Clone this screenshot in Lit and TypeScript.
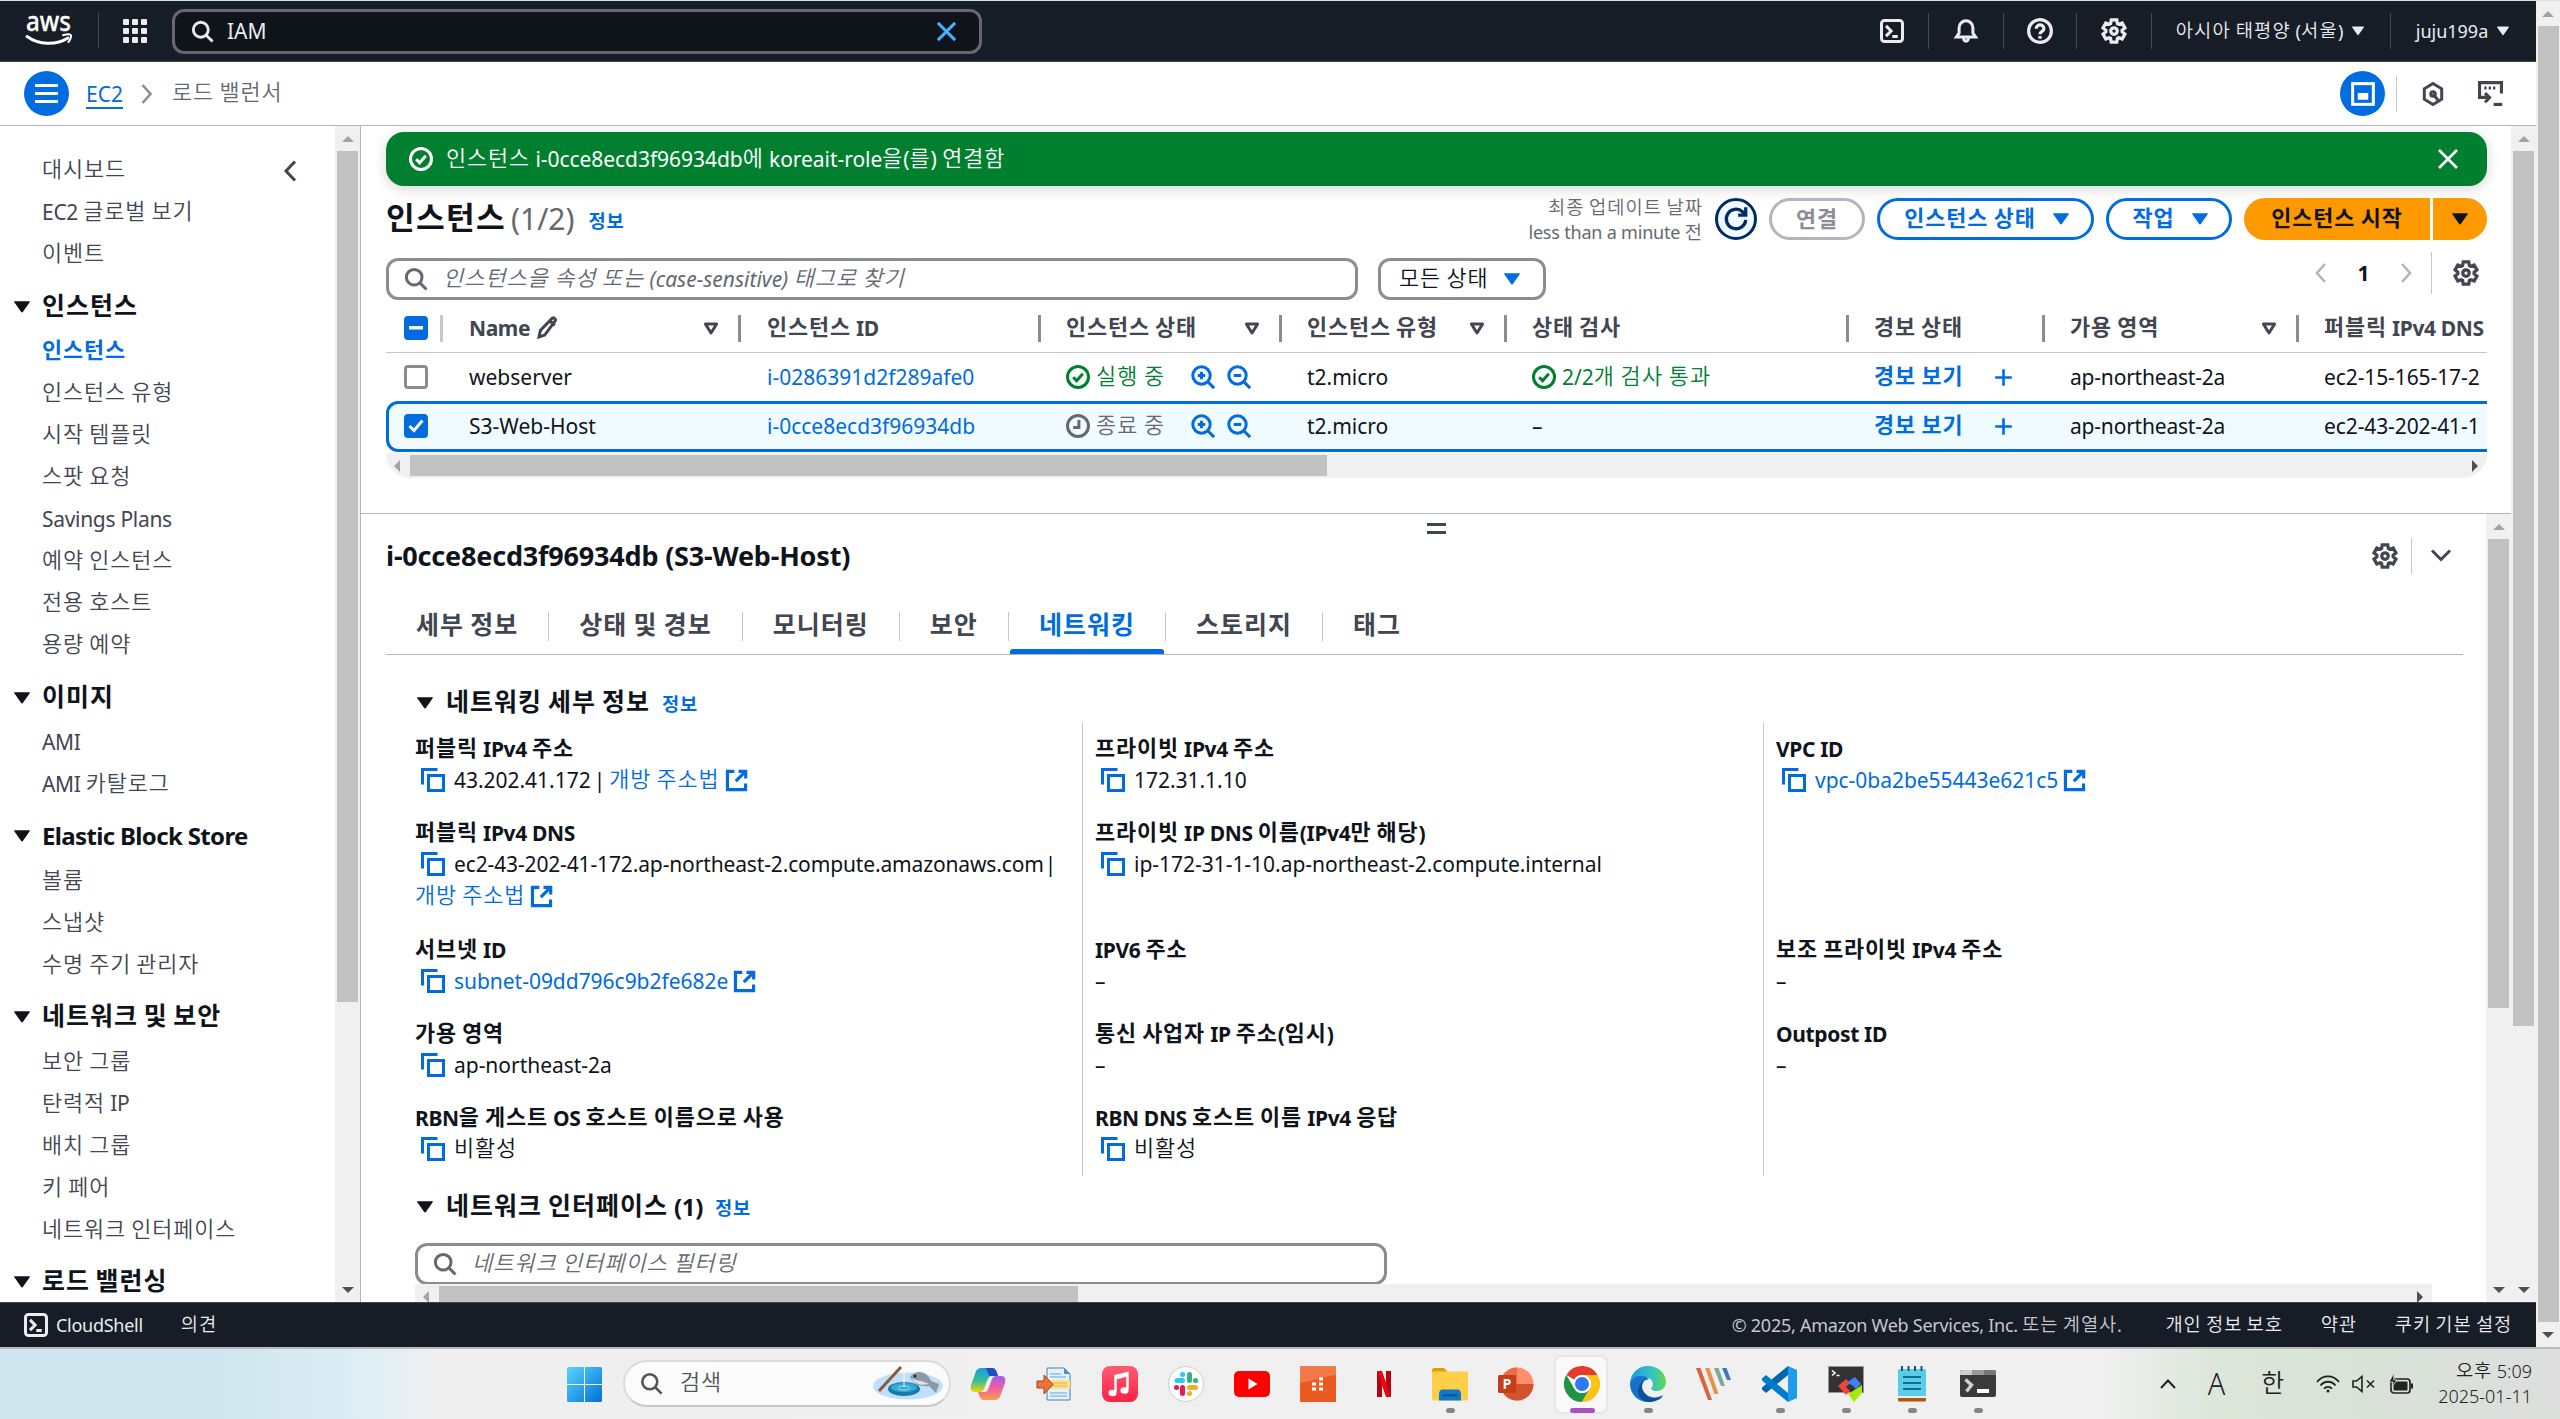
import { LitElement, html, svg, css, nothing, TemplateResult, SVGTemplateResult } from 'lit';
import { customElement } from 'lit/decorators.js';
import { classMap } from 'lit/directives/class-map.js';

/* Wraps Hangul runs so that they get their own face and pitch. */
const t = (s: string) =>
  s.split(/([가-힣]+)/).filter((p) => p !== '').map((p) => (/[가-힣]/.test(p) ? html`<span class="k">${p}</span>` : p));

const gearPath = (() => {
  const pts: string[] = [];
  for (let i = 0; i < 6; i++) {
    const base = -90 + i * 60;
    for (const [r, a] of [[5, -25], [7, -14], [7, 14], [5, 25]]) {
      const rad = ((base + a) * Math.PI) / 180;
      pts.push(`${(8 + r * Math.cos(rad)).toFixed(2)} ${(8 + r * Math.sin(rad)).toFixed(2)}`);
    }
  }
  return `M${pts.join('L')}Z`;
})();

const line: Record<string, SVGTemplateResult> = {
  search: svg`<circle cx="6.8" cy="6.8" r="5.2"/><path d="M10.6 10.6L15 15"/>`,
  close: svg`<path d="M2 2l12 12M14 2L2 14"/>`,
  shell: svg`<rect x="1" y="1" width="14" height="14" rx="2"/><path d="M4 4.6l3.4 3.4L4 11.4M8.2 11.6h3.6"/>`,
  bell: svg`<path d="M1.6 12h12.8L12.6 9.4V5.8a4.6 4.6 0 0 0-9.2 0v3.6zM6.4 12.4c0 3.2 3.2 3.2 3.2 0"/>`,
  help: svg`<circle cx="8" cy="8" r="7"/><path d="M5.7 6.6c0-3.1 4.7-3.1 4.7 0C10.4 8.3 8 8.1 8 10M8 11v1.7"/>`,
  gear: svg`<path d="${gearPath}"/><circle cx="8" cy="8" r="2"/>`,
  check: svg`<circle cx="8" cy="8" r="7"/><path d="M4.8 8.2l2.3 2.3 4.1-4.6"/>`,
  pending: svg`<circle cx="8" cy="8" r="7"/><path d="M8.6 4v5H4.8"/>`,
  zoomin: svg`<circle cx="7" cy="7" r="5.8"/><path d="M11.2 11.2L15.4 15.4M4.5 7h5M7 4.5v5"/>`,
  zoomout: svg`<circle cx="7" cy="7" r="5.8"/><path d="M11.2 11.2L15.4 15.4M4.5 7h5"/>`,
  edit: svg`<path d="M2 14l.9-4.4 8-8.2c.8-.8 2.6.9 1.9 1.8L5.8 12.7zM9.2 3.2l3.300 3"/>`,
  copy: svg`<path d="M1 11V1h10"/><rect x="5" y="5" width="10" height="10"/>`,
  external: svg`<path d="M6.500 1.600H1.700v12.800h12.600V10M9.400 1.600h5v5M14.200 1.800L7.500 8.500"/>`,
  refresh: svg`<path d="M14 8.500a6 6 0 1 1-2-5l1.700 1.700M14 .8v4.800H9.300"/>`,
  plus: svg`<path d="M8 1v14M1 8h14"/>`,
  hex: svg`<path d="M8 1l5.800 3.500v7L8 15l-5.800-3.500v-7z"/><path d="M8 8l3.400 4.200"/><circle cx="8" cy="8" r="1.500"/>`,
  tutorial: svg`<path d="M15 8V1H1v9.500h6M4.500 7.800L7.400 10.600 4.500 13.600"/><path d="M10 15h5.500"/><path stroke-dasharray="1.5 1.3" d="M4 4.500h8"/>`,
  splitpanel: svg`<rect x="1.100" y="1.100" width="13.800" height="13.800"/><path d="M4.500 7.300h7v4.500h-7z" fill="currentColor" stroke="none"/>`,
};

const ic = (name: string, size = 24, sw = 2) => html`<svg class="ic" width=${size} height=${size} viewBox="0 0 16 16" fill="none" stroke="currentColor" stroke-width=${sw}>${line[name]}</svg>`;
const caret = (w = 15, h = 11) => html`<svg class="ic" width=${w} height=${h} viewBox="0 0 15 11"><path d="M.8 0h13.400c.6 0 .9.6.5 1L8.300 10.300c-.4.6-1.200.6-1.600 0L.3 1C-.1.600.2 0 .8 0z" fill="currentColor"/></svg>`;
const sortIcon = html`<svg class="ic sort" width="16" height="14" viewBox="0 0 16 14"><path d="M2.400 3h11.200L8 12z" fill="none" stroke="currentColor" stroke-width="3" stroke-linejoin="round"/></svg>`;
const tri = (dir: string, dark: boolean) => html`<span class=${classMap({ tri: true, [dir]: true, dark })}></span>`;
const vbar = (cls: string) => html`<div class="vbar ${cls}">${tri('up', false)}<div class="vthumb"></div>${tri('dn', true)}</div>`;
const hbar = (cls: string) => html`<div class="hbar ${cls}">${tri('lf', false)}<div class="hthumb"></div>${tri('rt', true)}</div>`;

type Nav = { head?: string; items: string[] };
const NAV: Nav[] = [
  { items: ['대시보드', 'EC2 글로벌 보기', '이벤트'] },
  { head: '인스턴스', items: ['인스턴스', '인스턴스 유형', '시작 템플릿', '스팟 요청', 'Savings Plans', '예약 인스턴스', '전용 호스트', '용량 예약'] },
  { head: '이미지', items: ['AMI', 'AMI 카탈로그'] },
  { head: 'Elastic Block Store', items: ['볼륨', '스냅샷', '수명 주기 관리자'] },
  { head: '네트워크 및 보안', items: ['보안 그룹', '탄력적 IP', '배치 그룹', '키 페어', '네트워크 인터페이스'] },
  { head: '로드 밸런싱', items: [] },
];

type Field = { label: string; value: string; kind?: 'copy' | 'link'; extra?: string; tall?: boolean };
const FIELDS: Field[][] = [
  [
    { label: '퍼블릭 IPv4 주소', value: '43.202.41.172', kind: 'copy', extra: '개방 주소법' },
    { label: '퍼블릭 IPv4 DNS', value: 'ec2-43-202-41-172.ap-northeast-2.compute.amazonaws.com', kind: 'copy', extra: '개방 주소법', tall: true },
    { label: '서브넷 ID', value: 'subnet-09dd796c9b2fe682e', kind: 'link' },
    { label: '가용 영역', value: 'ap-northeast-2a', kind: 'copy' },
    { label: 'RBN을 게스트 OS 호스트 이름으로 사용', value: '비활성', kind: 'copy' },
  ],
  [
    { label: '프라이빗 IPv4 주소', value: '172.31.1.10', kind: 'copy' },
    { label: '프라이빗 IP DNS 이름(IPv4만 해당)', value: 'ip-172-31-1-10.ap-northeast-2.compute.internal', kind: 'copy', tall: true },
    { label: 'IPV6 주소', value: '–' },
    { label: '통신 사업자 IP 주소(임시)', value: '–' },
    { label: 'RBN DNS 호스트 이름 IPv4 응답', value: '비활성', kind: 'copy' },
  ],
  [
    { label: 'VPC ID', value: 'vpc-0ba2be55443e621c5', kind: 'link' },
    { label: '', value: '', tall: true },
    { label: '보조 프라이빗 IPv4 주소', value: '–' },
    { label: 'Outpost ID', value: '–' },
  ],
];

const ROWS = [
  { name: 'webserver', id: 'i-0286391d2f289afe0', running: true, check: '2/2개 검사 통과', dns: 'ec2-15-165-17-2', sel: false },
  { name: 'S3-Web-Host', id: 'i-0cce8ecd3f96934db', running: false, check: '–', dns: 'ec2-43-202-41-1', sel: true },
];

const app = (inner: SVGTemplateResult, state = '') => html`<div class="app ${state}"><svg width="36" height="36" viewBox="0 0 36 36">${inner}</svg>${state ? html`<i class="run"></i>` : nothing}</div>`;

@customElement('app-root')
export class AppRoot extends LitElement {
  static styles = css`
    :host { display: block; width: 2560px; height: 1419px; overflow: hidden; font-family: 'Noto Sans', 'Noto Sans CJK KR', sans-serif; font-size: 21px; line-height: 30px; color: #0f141a; background: #fff; --kw: 350; }
    * { box-sizing: border-box; }
    .k { font-family: 'Noto Sans CJK KR', sans-serif; font-size: 1.04em; letter-spacing: 0.042em; line-height: 0; font-weight: var(--kw); position: relative; top: -0.03em; }
    .b, .h1, .info, .btn, .th, .tabs, .sect, .lbl, .head, .item.on { --kw: 700; }
    .ic { flex: none; display: block; overflow: visible; }
    .row { display: flex; align-items: center; white-space: nowrap; }
    .b { font-weight: 700; }
    .blue { color: #006ce0; }
    .browser { display: flex; height: 1347px; }
    .page { width: 2536px; display: flex; flex-direction: column; border-top: 1px solid #d9e2dc; }

    /* scrollbars */
    .vbar { width: 25px; flex: none; background: #f0f0f0; display: flex; flex-direction: column; align-items: center; padding: 10px 0 9px; }
    .vthumb { width: 21px; background: #c1c1c1; margin: 9px 0 auto; }
    .vbar.outer { width: 24px; border-top: 1px solid #d9e2dc; }
    .outer .vthumb { height: 1296px; }
    .side .vthumb { height: 851px; }
    .main .vthumb { height: 875px; }
    .panel .vthumb { height: 469px; }
    .tri { width: 0; height: 0; flex: none; border: 6px solid transparent; }
    .up { border-width: 0 6px 6px; border-bottom-color: #a3a3a3; }
    .dn { border-width: 6px 6px 0; }
    .dn.dark { border-top-color: #505050; }
    .lf { border-width: 6px 6px 6px 0; border-right-color: #a3a3a3; }
    .rt { border-width: 6px 0 6px 6px; border-left-color: #505050; }
    .hbar { background: #f0f0f0; height: 25px; display: flex; align-items: center; padding: 0 9px 0 8px; }
    .hthumb { height: 21px; background: #c1c1c1; margin: 0 auto 0 10px; }
    .hbar.table { border-radius: 0 0 24px 24px; margin-top: 1px; }
    .table .hthumb { width: 917px; }
    .hbar.eni { width: 2017px; margin-top: -1px; position: relative; }
    .eni .hthumb { width: 639px; }

    /* top bar */
    .top { height: 61px; background: #161d26; border-bottom: 1px solid #424650; color: #ebebf0; font-size: 18px; padding-left: 25px; }
    .sep { width: 1px; height: 36px; background: #424650; flex: none; }
    .top > .sep { margin-left: 25px; }
    .grid9 { display: grid; grid-template-columns: repeat(3, 6px); gap: 3px; margin: 0 25px 0 24px; }
    .grid9 i { height: 6px; background: #ebebf0; border-radius: 1px; }
    .gsearch { width: 810px; height: 45px; border: 3px solid #656871; border-radius: 12px; background: #0f141a; padding: 0 21px 0 16px; font-size: 21px; }
    .gsearch .txt { margin-left: 13px; flex: 1; }
    .sky { color: #42b4ff; }
    .topicons { margin-left: auto; }
    .cell { display: flex; align-items: center; justify-content: center; height: 36px; border-left: 1px solid #424650; }
    .c1 { width: 73px; border-left: 0; }
    .c2 { width: 75px; }
    .c3 { width: 73px; }
    .c4 { width: 75px; }
    .c5 { width: 239px; }
    .c6 { width: 146px; }
    .c5, .c6 { gap: 9px; padding-right: 2px; }
    .c5 .k { letter-spacing: 0.065em; }

    /* breadcrumb bar */
    .crumbs { height: 64px; border-bottom: 1px solid #b4b4bb; padding-left: 24px; padding-right: 33px; }
    .round { width: 45px; height: 45px; border-radius: 50%; background: #006ce0; color: #fff; display: flex; align-items: center; justify-content: center; flex: none; }
    .burger { display: flex; flex-direction: column; gap: 5px; width: 23px; }
    .burger i { height: 3px; background: #fff; }
    .ec2 { color: #006ce0; line-height: 26px; border-bottom: 2px solid #006ce0; margin: 2px 18px 0 17px; }
    .here { color: #656871; margin: 0 0 1px 19px; }
    .tools { margin-left: auto; color: #424650; }
    .lt { background: #c6c6cd; margin: 0 24px 0 11px; }
    .hexi { margin-right: 33px; }

    /* body */
    .body { height: 1176px; display: flex; overflow: hidden; }
    .nav { width: 335px; color: #424650; padding-top: 23px; position: relative; overflow: hidden; white-space: nowrap; letter-spacing: -0.3px; }
    .nav .item { height: 42px; line-height: 42px; padding-left: 42px; }
    .nav .item.on { color: #006ce0; font-weight: 700; }
    .nav .head { height: 44px; margin-top: 10.8px; display: flex; align-items: center; font-size: 24px; font-weight: 700; color: #0f141a; padding: 0 0 2px 14px; gap: 12px; letter-spacing: -0.65px; }
    .collapse { position: absolute; left: 280px; top: 34px; }
    .work { border-left: 1px solid #b4b4bb; width: 2151px; flex: none; display: flex; flex-direction: column; }
    .upper { height: 387px; padding: 6px 24px 0 25px; overflow: hidden; }
    .flash { height: 54px; border-radius: 18px; background: #00802f; color: #fff; padding: 0 27px 0 23px; box-shadow: 0 3px 14px rgba(0, 7, 22, 0.16); font-size: 21px; }
    .flash .txt { margin-left: 13px; flex: 1; letter-spacing: -0.05px; }
    .hdr { height: 42px; margin-top: 12px; }
    .h1 { font-size: 30px; font-weight: 700; }
    .count { font-size: 30px; color: #656871; margin-left: 5px; }
    .info { font-size: 18px; font-weight: 700; color: #006ce0; margin: 5px 0 0 14px; }
    .stamp { margin: 2px 12px 0 auto; text-align: right; font-size: 18px; line-height: 25px; color: #656871; letter-spacing: -0.2px; }
    .stamp .k { top: 0; letter-spacing: 0.055em; }
    .btn { height: 42px; border: 3px solid #006ce0; color: #006ce0; border-radius: 21px; font-weight: 700; display: flex; align-items: center; justify-content: center; gap: 17px; margin-left: 12px; }
    .refresh { width: 42px; height: 42px; border: 3px solid #002b66; border-radius: 50%; color: #002b66; background: #f0fbff; display: flex; align-items: center; justify-content: center; }
    .w96 { width: 96px; border-color: #b4b4bb; color: #8c8c94; }
    .w217 { width: 217px; padding-left: 2px; }
    .w126 { width: 126px; padding-left: 2px; }
    .launch { width: 186px; background: #ff9900; border: 0; color: #0f141a; border-radius: 21px 0 0 21px; }
    .launchmore { width: 54px; background: #ff9900; border: 0; color: #0f141a; border-radius: 0 21px 21px 0; margin-left: 3px; }
    .filters { margin-top: 18px; height: 42px; }
    .field { width: 972px; height: 42px; border: 3px solid #8c8c94; border-radius: 12px; padding-left: 15px; color: #656871; background: #fff; }
    .field .txt { margin-left: 15px; font-style: italic; }
    .field .k { letter-spacing: 0.048em; }
    .select { width: 168px; height: 42px; border: 3px solid #8c8c94; border-radius: 12px; margin-left: 20px; padding: 0 23px 0 18px; justify-content: space-between; }
    .pager { margin: -12px 8px 0 auto; color: #b4b4bb; }
    .pager .n { color: #0f141a; font-weight: 700; width: 73px; text-align: center; }
    .pager .sep { background: #c6c6cd; height: 42px; margin: 0 21px 0 19px; }
    .gray { color: #424650; }

    .tr { display: grid; grid-template-columns: 57px 298px 300px 241px 225px 342px 196px 254px 188px; width: 2101px; align-items: center; white-space: nowrap; height: 48px; }
    .clip { overflow: hidden; width: 2101px; }
    .th { height: 53px; border-bottom: 1px solid #c6c6cd; color: #424650; font-weight: 700; padding-top: 4px; letter-spacing: -0.4px; }
    .th > div { height: 27px; border-right: 3px solid #8c8c94; }
    .tr > div { display: flex; align-items: center; padding: 0 0 0 26px; min-width: 0; }
    .tr.th > div { padding-right: 19px; }
    .tr > div:nth-child(n + 4) { padding-left: 25px; }
    .tr > div:nth-child(8) { letter-spacing: -0.2px; }
    .tr > div:last-child { letter-spacing: -0.1px; border-right: 0; padding-right: 0; }
    .tr.th > div:last-child { letter-spacing: -0.4px; }
    .th > div:first-child { border-color: #c6c6cd; }
    .th .sort { margin-left: auto; }
    .tr.tr > div:first-child { padding-left: 18px; padding-right: 0; }
    .tr.sel { height: 51px; width: 2130px; padding-bottom: 1px; border: 3px solid #006ce0; background: #f0fbff; border-radius: 12px; }
    .tr.sel > div { position: relative; left: -3px; }
    .box { width: 24px; height: 24px; border-radius: 4px; border: 3px solid #8c8c94; flex: none; background: #fff; }
    .box.full { background: #006ce0; border-color: #006ce0; color: #fff; display: flex; align-items: center; justify-content: center; }
    .green { color: #00802f; }
    .mut { color: #656871; }
    .st { margin-left: 6px; }
    .st .k { letter-spacing: 0.055em; }
    .zi { margin-left: 26px; color: #006ce0; }
    .zo { margin-left: 12px; color: #006ce0; }
    .pl { margin-left: 31px; color: #006ce0; }
    .pen { margin-left: 6px; }

    /* detail panel */
    .lower { flex: 1; border-top: 1px solid #b4b4bb; display: flex; min-height: 0; }
    .pbody { width: 2125px; flex: none; overflow: hidden; padding-left: 25px; }
    .handle { height: 24px; display: flex; flex-direction: column; align-items: center; gap: 5px; padding-top: 9px; width: 2100px; }
    .handle i { width: 19px; height: 3px; background: #424650; }
    .ptitle { height: 36px; font-size: 27px; font-weight: 700; padding: 0 35px 1px 0; letter-spacing: -0.19px; }
    .ptitle .sep { background: #c6c6cd; margin: 0 19px 0 13px; }
    .push { margin-left: auto; }
    .tabs { display: flex; margin-top: 27px; width: 2077px; height: 54px; border-bottom: 1px solid #b4b4bb; color: #424650; font-size: 24px; font-weight: 700; line-height: 50px; white-space: nowrap; }
    .tab { padding: 0 31px 0 30px; position: relative; }
    .tab.on { color: #006ce0; }
    .tab.on::after { content: ''; position: absolute; left: 1px; right: 2px; bottom: 0; height: 5px; background: #006ce0; border-radius: 3px 3px 0 0; }
    .tab:not(:last-child)::before { content: ''; position: absolute; right: 0; top: 11px; height: 29px; width: 1px; background: #c6c6cd; }
    .sect { height: 36px; margin-top: 30px; padding-left: 31px; font-size: 24px; font-weight: 700; letter-spacing: -0.3px; }
    .sect .txt { margin-left: 13px; }
    .sect .info { margin-left: 12px; margin-top: 3px; }
    .sect2 { margin-top: 13px; }
    .cols { display: flex; margin: 2px 0 0 29px; height: 453px; }
    .col { width: 681px; border-left: 1px solid #c6c6cd; padding-left: 12px; }
    .col:first-child { border: 0; padding: 0; width: 667px; }
    .fld { height: 84px; padding-top: 11px; }
    .fld.tall { height: 117px; }
    .lbl { font-weight: 700; height: 30px; line-height: 31px; white-space: nowrap; letter-spacing: -0.35px; }
    .val { height: 32px; line-height: 32px; letter-spacing: -0.03px; }
    .col:first-child .tall .val { letter-spacing: -0.14px; }
    .cpw { margin: 0 9px 0 6px; }
    .ext { margin-left: 5px; }
    .bar { margin: 0 4px 0 3px; }
    .tall .bar { margin: 0 0 0 1px; }
    .eniwrap { padding-left: 29px; margin-top: 18px; }

    /* console footer */
    .foot { height: 45px; background: #161d26; border-top: 1px solid #424650; color: #ebebf0; font-size: 18px; padding: 0 24px; letter-spacing: -0.27px; }
    .foot .fb { margin-left: 38px; }
    .foot .c { margin-left: auto; color: #c6c6cd; }
    .foot .cs { margin-left: 8px; }
    .foot .p { margin-left: 44px; }
    .foot .q { margin-left: 38px; }
    .foot .k { letter-spacing: 0.045em; }

    /* desktop taskbar */
    .task { height: 72px; border-top: 2px solid #b9b9bb; display: flex; align-items: center; position: relative; background: linear-gradient(90deg, #cfe4ec 0, #d0e5ed 220px, #dceef5 350px, #efeff0 440px, #f0f0f0 2100px, #dbe5d8 2230px, #d9e1d7 2400px, #dddedd 2560px); color: #222; padding-left: 567px; }
    .pill { width: 328px; height: 47px; border-radius: 24px; background: #fbfbfb; border: 2px solid #dcdcdc; border-bottom-color: #c8c8c8; margin: 0 4px 2px 21px; padding: 0 5px 0 15px; color: #555; }
    .pill .txt { margin-left: 17px; flex: 1; font-weight: 300; }
    .app { width: 66px; height: 66px; display: flex; align-items: center; justify-content: center; position: relative; }
    .run { position: absolute; bottom: 4px; width: 9px; height: 5px; border-radius: 3px; background: #868686; }
    .active::before { content: ''; position: absolute; inset: 4px 7px 3px 5px; border-radius: 8px; background: #f9f9f9; border: 2px solid #e6e6e6; }
    .active svg { position: relative; }
    .active .run { width: 25px; background: #aa4fc4; }
    .tray { margin-left: auto; padding-right: 28px; font-weight: 300; }
    .mute { margin: 0 13px 0 12px; }
    .clock { text-align: right; font-size: 18px; line-height: 25px; margin-left: 25px; }
    .A { font-size: 31px; width: 20px; margin: 0 34px 2px 31px; transform: scaleX(0.93); }
    .han { font-size: 24px; margin: 0 31px 0 0; }
  `;

  private topBar() {
    return html`<div class="top row">
      <svg class="ic" width="48" height="30" viewBox="0 0 48 30" fill="none" stroke="#fff" stroke-linecap="round"><text x="1" y="14.800" fill="#fff" stroke="#fff" stroke-width=".3" font-family="Noto Sans" font-weight="500" font-size="27" textLength="45" lengthAdjust="spacingAndGlyphs">aws</text><path stroke-width="3" d="M2 20.500c12 8.500 29 9 41 1.500"/><path stroke-width="2" d="M38 19.300c3-1 6.500-1.300 7.800-.3.800 1.200-.2 4.500-2.400 7"/></svg>
      <span class="sep"></span>
      <span class="grid9">${Array.from({ length: 9 }, () => html`<i></i>`)}</span>
      <div class="gsearch row">${ic('search', 23, 2)}<span class="txt">IAM</span><span class="sky">${ic('close', 23, 2)}</span></div>
      <div class="topicons row">
        <div class="cell c1">${ic('shell')}</div><div class="cell c2">${ic('bell')}</div><div class="cell c3">${ic('help', 26)}</div><div class="cell c4">${ic('gear', 26)}</div>
        <div class="cell c5"><span>${t('아시아 태평양 (서울)')}</span>${caret(12, 10)}</div>
        <div class="cell c6"><span>juju199a</span>${caret(12, 10)}</div>
      </div>
    </div>`;
  }

  private crumbs() {
    return html`<div class="crumbs row">
      <span class="round"><span class="burger"><i></i><i></i><i></i></span></span>
      <span class="ec2">EC2</span><svg class="ic" width="12" height="20" viewBox="0 0 12 20" fill="none" stroke="#8c8c94" stroke-width="2.600"><path d="M1.500 1l8 9-8 9"/></svg>
      <span class="here">${t('로드 밸런서')}</span>
      <div class="tools row"><span class="round">${ic('splitpanel', 24, 2)}</span><span class="sep lt"></span><span class="hexi">${ic('hex', 24, 2)}</span><span>${ic('tutorial', 25, 2)}</span></div>
    </div>`;
  }

  private nav() {
    return html`<div class="nav"><svg class="collapse" width="20" height="22" viewBox="0 0 20 22" fill="none" stroke="#424650" stroke-width="3"><path d="M15 1.500L6 11l9 9.500"/></svg>
      ${NAV.map((g, gi) => html`${g.head ? html`<div class="head">${caret(16, 12)}<span>${t(g.head)}</span></div>` : nothing}
      ${g.items.map((s, i) => html`<div class=${classMap({ item: true, on: gi === 1 && i === 0 })}>${t(s)}</div>`)}`)}
    </div>`;
  }

  private upper() {
    const head: [string, TemplateResult | typeof nothing, boolean][] = [
      ['Name', html`<span class="pen">${ic('edit', 24, 2)}</span>`, true], ['인스턴스 ID', nothing, false], ['인스턴스 상태', nothing, true], ['인스턴스 유형', nothing, true],
      ['상태 검사', nothing, false], ['경보 상태', nothing, false], ['가용 영역', nothing, true], ['퍼블릭 IPv4 DNS', nothing, false],
    ];
    return html`<div class="upper">
      <div class="flash row">${ic('check', 24, 2)}<span class="txt">${t('인스턴스 i-0cce8ecd3f96934db에 koreait-role을(를) 연결함')}</span>${ic('close', 24, 1.8)}</div>
      <div class="hdr row">
        <span class="h1">${t('인스턴스')}</span><span class="count">(1/2)</span><span class="info">${t('정보')}</span>
        <div class="stamp">${t('최종 업데이트 날짜')}<br>${t('less than a minute 전')}</div>
        <span class="refresh">${ic('refresh', 26, 2)}</span>
        <span class="btn w96">${t('연결')}</span>
        <span class="btn w217"><span>${t('인스턴스 상태')}</span>${caret(16, 12)}</span>
        <span class="btn w126"><span>${t('작업')}</span>${caret(16, 12)}</span>
        <span class="btn launch"><span>${t('인스턴스 시작')}</span></span><span class="btn launchmore">${caret(16, 12)}</span>
      </div>
      <div class="filters row">
        <div class="field row">${ic('search', 24, 2)}<span class="txt">${t('인스턴스을 속성 또는 (case-sensitive) 태그로 찾기')}</span></div>
        <div class="select row"><span>${t('모든 상태')}</span><span class="blue">${caret(16, 12)}</span></div>
        <div class="pager row">
          <svg class="ic" width="12" height="20" viewBox="0 0 12 20" fill="none" stroke="currentColor" stroke-width="2.600"><path d="M10 1L2 10l8 9"/></svg><span class="n">1</span>
          <svg class="ic" width="12" height="20" viewBox="0 0 12 20" fill="none" stroke="currentColor" stroke-width="2.600"><path d="M2 1l8 9-8 9"/></svg><span class="sep"></span><span class="gray">${ic('gear', 26)}</span>
        </div>
      </div>
      <div class="clip">
        <div class="tr th"><div><span class="box full"><svg class="ic" width="14" height="4"><rect width="14" height="3.500" fill="#fff"/></svg></span></div>
          ${head.map(([s, x, so]) => html`<div><span>${t(s)}</span>${x}${so ? sortIcon : nothing}</div>`)}</div>
        ${ROWS.map((r) => html`<div class=${classMap({ tr: true, sel: r.sel })}>
          <div>${r.sel ? html`<span class="box full"><svg class="ic" width="16" height="14" viewBox="0 0 16 14" fill="none" stroke="#fff" stroke-width="3"><path d="M1.500 7l4.500 4.500L14.500 1.500"/></svg></span>` : html`<span class="box"></span>`}</div>
          <div>${r.name}</div><div class="blue">${r.id}</div>
          <div class=${r.running ? 'green' : 'mut'}>${ic(r.running ? 'check' : 'pending', 24, 2)}<span class="st">${t(r.running ? '실행 중' : '종료 중')}</span><span class="zi">${ic('zoomin', 24, 2)}</span><span class="zo">${ic('zoomout', 24, 2)}</span></div>
          <div>t2.micro</div>
          <div>${r.running ? html`<span class="green row">${ic('check', 24, 2)}<span class="st">${t(r.check)}</span></span>` : r.check}</div>
          <div><span class="b blue">${t('경보 보기')}</span><span class="pl">${ic('plus', 19, 2.200)}</span></div>
          <div>ap-northeast-2a</div><div>${r.dns}</div>
        </div>`)}
      </div>
      ${hbar('table')}
    </div>`;
  }

  private field(f: Field) {
    const link = (s: string) => html`<span class="blue">${t(s)}</span><span class="blue ext">${ic('external', 23, 2.200)}</span>`;
    return html`<div class=${classMap({ fld: true, tall: !!f.tall })}>
      <div class="lbl">${t(f.label)}</div>
      <div class="val row">${f.kind ? html`<span class="cpw blue">${ic('copy', 24, 2)}</span>` : nothing}${f.kind === 'link' ? link(f.value) : html`<span>${t(f.value)}</span>`}
        ${f.extra ? html`<span class="bar">|</span>${f.tall ? nothing : link(f.extra)}` : nothing}</div>
      ${f.extra && f.tall ? html`<div class="val row">${link(f.extra)}</div>` : nothing}
    </div>`;
  }

  private lower() {
    return html`<div class="lower"><div class="pbody">
      <div class="handle"><i></i><i></i></div>
      <div class="ptitle row"><span>i-0cce8ecd3f96934db (S3-Web-Host)</span><span class="push gray">${ic('gear', 26)}</span><span class="sep"></span><span class="gray"><svg class="ic" width="20" height="13" viewBox="0 0 20 13" fill="none" stroke="currentColor" stroke-width="3"><path d="M1 1.500l9 9 9-9"/></svg></span></div>
      <div class="tabs">${['세부 정보', '상태 및 경보', '모니터링', '보안', '네트워킹', '스토리지', '태그'].map((s, i) => html`<div class=${classMap({ tab: true, on: i === 4 })}>${t(s)}</div>`)}</div>
      <div class="sect row">${caret(16, 12)}<span class="txt">${t('네트워킹 세부 정보')}</span><span class="info">${t('정보')}</span></div>
      <div class="cols">${FIELDS.map((c) => html`<div class="col">${c.map((f) => this.field(f))}</div>`)}</div>
      <div class="sect sect2 row">${caret(16, 12)}<span class="txt">${t('네트워크 인터페이스 (1)')}</span><span class="info">${t('정보')}</span></div>
      <div class="eniwrap"><div class="field row">${ic('search', 24, 2)}<span class="txt">${t('네트워크 인터페이스 필터링')}</span></div>${hbar('eni')}</div>
    </div>${vbar('panel')}</div>`;
  }

  private taskbar() {
    return html`<div class="task">
      <svg class="ic" width="35" height="35" viewBox="0 0 35 35"><defs><linearGradient id="w" x1="0" y1="0" x2="1" y2="1"><stop offset="0" stop-color="#5bd3ff"/><stop offset="1" stop-color="#0070d8"/></linearGradient></defs><path fill="url(#w)" d="M1 0h16v17H0V1zM18 0h16l1 1v16H18zM0 18h17v17H1l-1-1zM18 18h17v16l-1 1H18z"/></svg>
      <div class="pill row">${ic('search', 23, 1.800)}<span class="txt">${t('검색')}</span>
        <svg class="ic" width="72" height="36" viewBox="0 0 72 36"><ellipse cx="36" cy="21" rx="35" ry="13.500" fill="#bfdffb"/><ellipse cx="32" cy="24" rx="16" ry="7" fill="#1878a8"/><ellipse cx="32" cy="22.500" rx="13" ry="4.500" fill="#35a9d6"/><ellipse cx="32" cy="23" rx="6" ry="2" fill="none" stroke="#9be0f5"/><path d="M29 2L7 26" stroke="#8a5a3a" stroke-width="3"/><path d="M32 8v14" stroke="#fff"/><path d="M38 12c6-8 17-6 21 4l8 3-3 9-7-7c-8 1-16-2-19-9z" fill="#8b98a5"/><path d="M39 13c6 3 13 3 18 6-7 2-15 0-18-6z" fill="#dbe3ea"/><circle cx="43" cy="11" r="1.500" fill="#222"/></svg></div>
      ${app(svg`<defs><linearGradient id="ca" x1="0" y1="0" x2="0" y2="1"><stop offset="0" stop-color="#1a9be6"/><stop offset=".55" stop-color="#3bbf8f"/><stop offset="1" stop-color="#f5d400"/></linearGradient><linearGradient id="cb" x1="0" y1="0" x2="0" y2="1"><stop offset="0" stop-color="#a15cf0"/><stop offset=".5" stop-color="#ee5f9c"/><stop offset="1" stop-color="#ff9e4a"/></linearGradient></defs><path d="M12 2h10c3 0 4 2 5 5l1 3h-6c-3 0-4 2-5 5l-3 8c-1 2-2 3-4 3H5c-4 0-5-3-4-7l4-11c1-4 3-6 7-6z" fill="url(#ca)"/><path d="M16 2h6c3 0 4 2 5 5l1 3h-6c-2 0-3 0-4-3z" fill="#1c4fc4"/><path d="M24 34H14c-3 0-4-2-5-5l-1-3h6c3 0 4-2 5-5l3-8c1-2 2-3 4-3h5c4 0 5 3 4 7l-4 11c-1 4-3 6-7 6z" fill="url(#cb)"/>`)}
      ${app(svg`<path d="M11 2h17l6 6v26H11z" fill="#e4f2fd" stroke="#4a7fae"/><path d="M28 2v6h6z" fill="#4a90d0"/><path d="M14 8h11M14 11h16M14 27h17M14 30h17" stroke="#8fbce4" stroke-width="1.400"/><path d="M11 14h23v9H11z" fill="#ffe08a"/><path d="M14 17h17M14 20h17" stroke="#e8b040"/><path d="M1 15h7V9l9 9.500L8 28v-6H1z" fill="#e8743a" stroke="#a84414"/>`)}
      ${app(svg`<defs><linearGradient id="mu" x1="0" y1="0" x2="0" y2="1"><stop offset="0" stop-color="#ff5c74"/><stop offset="1" stop-color="#fa2342"/></linearGradient></defs><rect width="36" height="36" rx="8" fill="url(#mu)"/><path d="M13.500 26V10l12-3v16" fill="none" stroke="#fff" stroke-width="2.400"/><path d="M13.500 9.500l12-3v4l-12 3z" fill="#fff"/><ellipse cx="10.500" cy="27" rx="4" ry="3.200" fill="#fff"/><ellipse cx="22.500" cy="24.500" rx="4" ry="3.200" fill="#fff"/>`)}
      ${app(svg`<circle cx="18" cy="18" r="17.500" fill="#fff" stroke="#ccc"/><g stroke-width="5" stroke-linecap="round"><path d="M9 14.500h5.500" stroke="#36c5f0"/><path d="M14.500 8.500h.1" stroke="#36c5f0"/><path d="M21.500 8.500v6" stroke="#2eb67d"/><path d="M27.500 14.500h.1" stroke="#2eb67d"/><path d="M21.500 21.500h6" stroke="#ecb22e"/><path d="M21.500 27.500h.1" stroke="#ecb22e"/><path d="M14.500 21.500v6" stroke="#e01e5a"/><path d="M8.500 21.500h.1" stroke="#e01e5a"/></g>`)}
      ${app(svg`<rect y="5" width="36" height="26" rx="5" fill="#f00"/><path d="M14.500 12.500v11l9-5.500z" fill="#fff"/>`)}
      ${app(svg`<rect width="36" height="36" fill="#eb5a1e"/><path d="M0 0h36v9C22 11 12 15 0 17z" fill="#f27a48"/><g fill="#fff"><rect x="19" y="11.500" width="4" height="3"/><rect x="12" y="16.500" width="4" height="3"/><rect x="19" y="16.500" width="4" height="3"/><rect x="12" y="21.500" width="4" height="3"/><rect x="19" y="21.500" width="4" height="3"/></g>`)}
      ${app(svg`<path d="M11 5h5v26h-5zM20 5h5v26h-5z" fill="#b1060f"/><path d="M11 5h5l9 26h-5z" fill="#e50914"/>`)}
      ${app(svg`<path d="M0 5c0-2 1-3 2-3h10l4 4h20v10H0z" fill="#e0a000"/><rect y="5.500" width="36" height="29" rx="1.500" fill="#ffcf48"/><path d="M7 34.500v-6c0-3 1-5 4-5h14c3 0 4 2 4 5v6z" fill="#0f78c8"/><path d="M11 29.300h14" stroke="#0a4e8c" stroke-width="2"/>`, 'r')}
      ${app(svg`<circle cx="19" cy="18" r="16.500" fill="#ff8f6b"/><path d="M19 1.500a16.500 16.500 0 0 0-16.500 16.500H19z" fill="#ed6c47"/><path d="M2.500 18a16.500 16.500 0 0 0 33 0z" fill="#d35230"/><rect y="9" width="18" height="18" rx="1.500" fill="#c43e1c"/><text x="4.500" y="23" font-size="14" font-weight="700" font-family="Open Sans" fill="#fff">P</text>`)}
      ${app(svg`<circle cx="18" cy="18" r="18" fill="#fff"/><path d="M2.400 9A18 18 0 0 1 33.600 9H18a9 9 0 0 0-7.800 4.500z" fill="#e33b2e"/><path d="M2.400 9A18 18 0 0 0 18 36l7.800-13.500A9 9 0 0 1 10.200 22.500z" fill="#229342"/><path d="M33.600 9A18 18 0 0 1 18 36l7.800-13.500A9 9 0 0 0 18 9z" fill="#fbc116"/><circle cx="18" cy="18" r="9" fill="#fff"/><circle cx="18" cy="18" r="7" fill="#2f78ee"/>`, 'active')}
      ${app(svg`<defs><linearGradient id="eg" x1="0" x2="1"><stop offset="0" stop-color="#1a9bd8"/><stop offset=".6" stop-color="#35c1c8"/><stop offset="1" stop-color="#66d94a"/></linearGradient></defs><path d="M0 17C1 6 9 0 18 0c11 0 18 8 18 16 0 6-5 9-9 9-5 0-7-2-5-4 3-4-1-10-8-10C7 11 1 14 0 20z" fill="url(#eg)"/><path d="M0 18C1 13 6 9.500 12 10c3 .3 5 1 7 3-7 1-9 8-5 13 4 6 12 7 19 3-3 4-9 7-15 7C8 36 0 28 0 18z" fill="#1672c8"/><path d="M14 14c-5 8 0 19 12 18 3 0 5-1 7-2-3 4-9 6-15 6-8-1-12-9-9-15 1-3 3-6 5-7z" fill="#0d4f96"/>`, 'r')}
      ${app(svg`<path d="M0 2h4.500l11.500 32h-4z" fill="#d9623f"/><path d="M9 2h4.500l9 26h-4z" fill="#e8914a"/><path d="M18 2h4.500l6.500 18h-4z" fill="#78aaa0"/><path d="M26 2h4.500l4.500 12h-4z" fill="#4079b8"/>`)}
      ${app(svg`<path d="M26 0l9 4v28l-9 4z" fill="#1f9cf0"/><path d="M26 0v9L4 27l-4-3.500v-2z" fill="#0065a9"/><path d="M26 36v-9L4 9 0 12.500v2z" fill="#007acc"/>`, 'r')}
      ${app(svg`<rect x=".5" y=".5" width="35" height="26" fill="#333" stroke="#999"/><path d="M4 4.500l3 2.500-3 2.500M8.500 9.500h3" stroke="#fff" stroke-width="1.600" fill="none"/><path d="M10 20l8-7 4 4-4 4 4 4-4 4z" fill="#f04438"/><path d="M18 17l9-6 6 7-5 5-4-4z" fill="#3f82f0"/><path d="M20 28l8-5 6-4v8l-8 9z" fill="#a4e80c"/>`, 'r')}
      ${app(svg`<rect x="4" y="3" width="28" height="28" rx="2" fill="#5bcbe8"/><path d="M4 30h28v2H4z" fill="#eee"/><path d="M4 32h28v2.500a1 1 0 0 1-1 1H5a1 1 0 0 1-1-1z" fill="#b05410"/><path d="M9 11h18M9 17h18M9 23h18" stroke="#0c6f94" stroke-width="1.800"/><path d="M8 0v5M14.500 0v5M21 0v5M27.500 0v5" stroke="#0d5a78" stroke-width="2"/>`, 'r')}
      ${app(svg`<rect y="4" width="36" height="27" rx="2" fill="#3a3a3a"/><path d="M2 4h10v5H0V6c0-1 1-2 2-2z" fill="#ccc"/><path d="M12 4h12v5H12z" fill="#999"/><path d="M24 4h10c1 0 2 1 2 2v3H24z" fill="#777"/><path d="M5.500 13.500l6 5.500-5 6.500" stroke="#d0d0d0" stroke-width="3.400" fill="none"/><rect x="17" y="23" width="12" height="4" fill="#fff"/>`, 'r')}
      <div class="tray row">
        <svg class="ic" width="16" height="10" viewBox="0 0 16 10" fill="none" stroke="#222" stroke-width="2"><path d="M1 9l7-7.500L15 9"/></svg>
        <span class="A">A</span><span class="han">${t('한')}</span>
        <svg class="ic" width="24" height="18" viewBox="0 0 24 18" fill="none" stroke="#222" stroke-width="1.800"><path d="M1 7c6-7.500 16-7.500 22 0M4.500 10.500c4-5 11-5 15 0M8 13.800c2-2.500 6-2.500 8 0"/><circle cx="12" cy="16" r="1.500" fill="#222" stroke="none"/></svg>
        <svg class="ic mute" width="24" height="18" viewBox="0 0 24 18" fill="none" stroke="#222" stroke-width="1.600"><path d="M1 6h3.500L10 1.500v15L4.500 12H1zM15 5.500l7 7M22 5.500l-7 7"/></svg>
        <svg class="ic" width="24" height="20" viewBox="0 0 24 20"><rect x="2" y="5" width="19" height="14" rx="3" fill="none" stroke="#222" stroke-width="1.700"/><rect x="4.500" y="7.500" width="14" height="9" rx="1" fill="#222"/><path d="M22 9.500h2v5h-2z" fill="#222"/><path d="M5 -1L0 8h4l-1 5 5-7H4.800z" fill="#222" stroke="#dde3dc" stroke-width=".8"/></svg>
        <div class="clock">${t('오후 5:09')}<br>2025-01-11</div>
      </div>
    </div>`;
  }

  render() {
    return html`<div class="browser"><div class="page">
      ${this.topBar()}${this.crumbs()}
      <div class="body">${this.nav()}${vbar('side')}<div class="work">${this.upper()}${this.lower()}</div>${vbar('main')}</div>
      <div class="foot row">${ic('shell')}<span class="cs">CloudShell</span><span class="fb">${t('의견')}</span><span class="c">${t('© 2025, Amazon Web Services, Inc. 또는 계열사.')}</span><span class="p">${t('개인 정보 보호')}</span><span class="q">${t('약관')}</span><span class="q">${t('쿠키 기본 설정')}</span></div>
    </div>${vbar('outer')}</div>${this.taskbar()}`;
  }
}
